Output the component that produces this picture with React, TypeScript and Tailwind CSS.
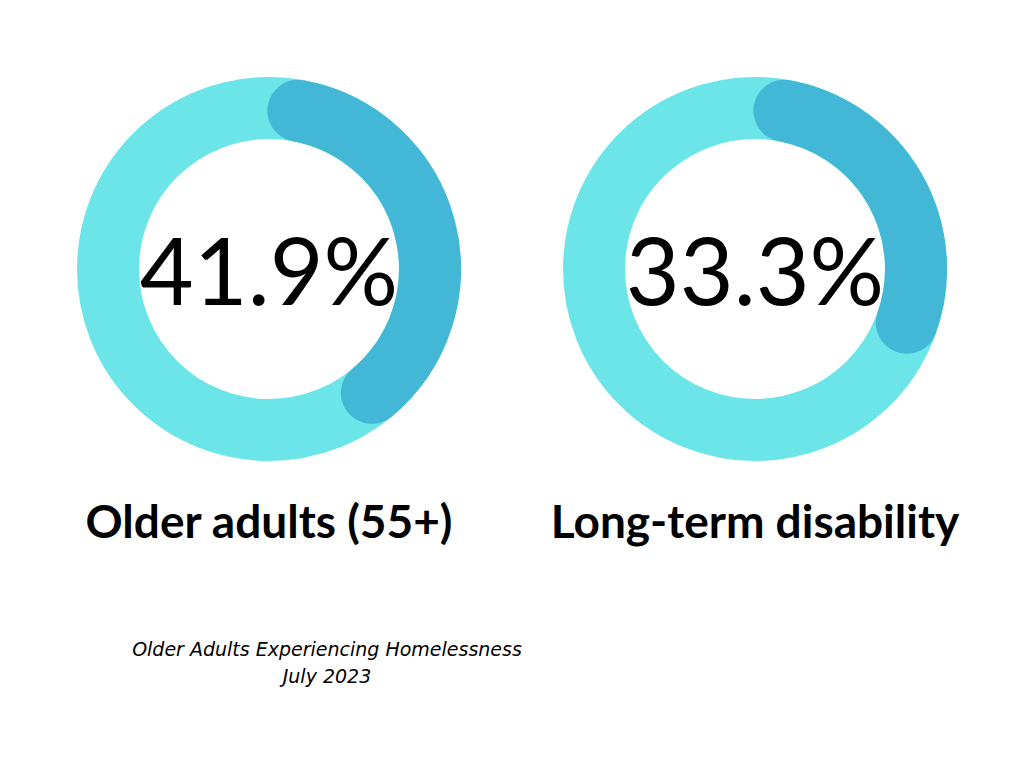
const LIGHT = "#6be5e8";
const DARK = "#43b8d6";

function arcPath(r: number, from: number, to: number) {
  const c = 192;
  const rad = (d: number) => (d * Math.PI) / 180;
  const x1 = c + r * Math.sin(rad(from));
  const y1 = c - r * Math.cos(rad(from));
  const x2 = c + r * Math.sin(rad(to));
  const y2 = c - r * Math.cos(rad(to));
  const large = to - from > 180 ? 1 : 0;
  return `M ${x1} ${y1} A ${r} ${r} 0 ${large} 1 ${x2} ${y2}`;
}

function Donut({ value, from, to }: { value: string; from: number; to: number }) {
  return (
    <div className="relative w-[384px] h-[384px]">
      <svg width="384" height="384" viewBox="0 0 384 384">
        <circle cx="192" cy="192" r="161" fill="none" stroke={LIGHT} strokeWidth="62" />
        <path d={arcPath(161, from, to)} fill="none" stroke={DARK} strokeWidth="62" strokeLinecap="round" />
      </svg>
      <div className="absolute inset-0 flex items-center justify-center">
        <span className="text-[93px] leading-none text-black font-['Lato',sans-serif] font-normal">
          {value}
        </span>
      </div>
    </div>
  );
}

function Stat({ value, label, from, to }: { value: string; label: string; from: number; to: number }) {
  return (
    <div className="flex flex-col items-center w-[384px]">
      <Donut value={value} from={from} to={to} />
      <div className="mt-[37px] text-[46px] leading-none font-bold text-black whitespace-nowrap font-['Lato',sans-serif]">
        {label}
      </div>
    </div>
  );
}

export default function App() {
  return (
    <div className="w-[1024px] h-[768px] bg-white pl-[77px] pt-[77px]">
      <div className="flex gap-[102px]">
        <Stat value="41.9%" label="Older adults (55+)" from={10.5} to={140.3} />
        <Stat value="33.3%" label="Long-term disability" from={10.5} to={109.5} />
      </div>
      <div className="mt-[92px] w-[500px] text-center italic text-[19px] leading-[27px] text-black font-['DejaVu_Sans',sans-serif]">
        <p>Older Adults Experiencing Homelessness</p>
        <p>July 2023</p>
      </div>
    </div>
  );
}
